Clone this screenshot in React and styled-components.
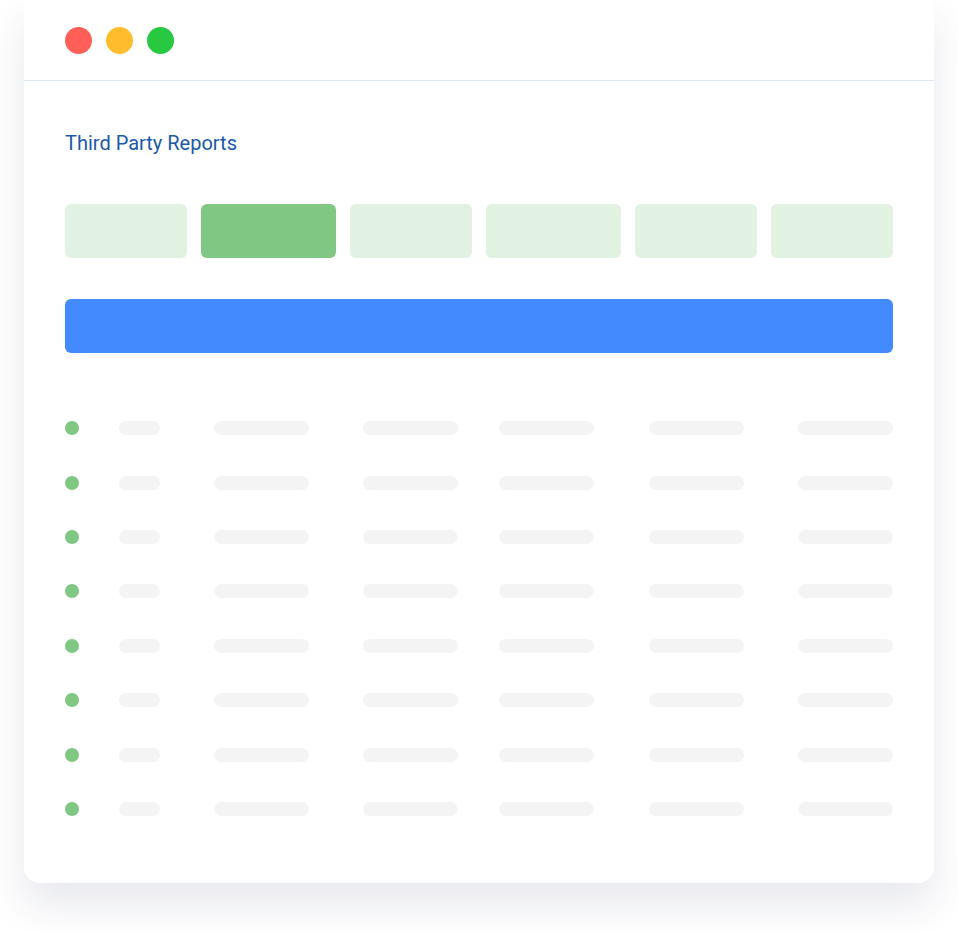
import React from "react";
import styled, { createGlobalStyle } from "styled-components";

const GlobalStyle = createGlobalStyle`
  * { box-sizing: border-box; }
  body {
    margin: 0;
    background: #ffffff;
    font-family: Roboto, "Liberation Sans", sans-serif;
  }
`;

const Page = styled.div`
  width: 958px;
  height: 932px;
  padding-left: 24px;
  overflow: hidden;
`;

const Window = styled.div`
  width: 910px;
  height: 883px;
  background: #ffffff;
  border-radius: 0 0 16px 16px;
  box-shadow: 0 22px 40px rgba(40, 50, 90, 0.11);
`;

const TitleBar = styled.header`
  height: 81px;
  display: flex;
  align-items: center;
  gap: 14px;
  padding: 0 0 0 41px;
  border-bottom: 1.5px solid #dde8f6;
`;

const Light = styled.span`
  width: 27px;
  height: 27px;
  border-radius: 50%;
  background: ${(p) => p.$color};
`;

const Content = styled.main`
  padding: 50px 41px 0;
`;

const Title = styled.h1`
  margin: 0;
  font-size: 20px;
  line-height: 24px;
  font-weight: 400;
  color: #1a5aa8;
`;

const Tabs = styled.div`
  margin-top: 49px;
  display: grid;
  grid-template-columns: 122px 135px 122px 135px 122px 122px;
  gap: 14px;
`;

const Tab = styled.div`
  height: 54px;
  border-radius: 6px;
  background: ${(p) => (p.$active ? "#81c784" : "#e1f1e2")};
`;

const Banner = styled.div`
  margin-top: 41px;
  height: 54px;
  border-radius: 6px;
  background: #448aff;
`;

const Table = styled.div`
  margin-top: 48px;
  display: grid;
  grid-template-columns: 54px 95px 149px 136px 150px 149px 95px;
  grid-auto-rows: 54.4px;
  align-items: center;
`;

const Dot = styled.span`
  width: 14px;
  height: 14px;
  border-radius: 50%;
  background: #81c784;
`;

const Pill = styled.span`
  width: ${(p) => p.$w}px;
  height: 14px;
  border-radius: 7px;
  background: #f4f4f4;
`;

const cols = [41, 95, 95, 95, 95, 95];

export default function App() {
  return (
    <Page>
      <GlobalStyle />
      <Window>
        <TitleBar>
          <Light $color="#ff5f57" />
          <Light $color="#ffbd2e" />
          <Light $color="#28c940" />
        </TitleBar>
        <Content>
          <Title>Third Party Reports</Title>
          <Tabs>
            {[0, 1, 2, 3, 4, 5].map((i) => (
              <Tab key={i} $active={i === 1} />
            ))}
          </Tabs>
          <Banner />
          <Table>
            {Array.from({ length: 8 }).map((_, r) => (
              <React.Fragment key={r}>
                <Dot />
                {cols.map((w, c) => (
                  <Pill key={c} $w={w} />
                ))}
              </React.Fragment>
            ))}
          </Table>
        </Content>
      </Window>
    </Page>
  );
}
